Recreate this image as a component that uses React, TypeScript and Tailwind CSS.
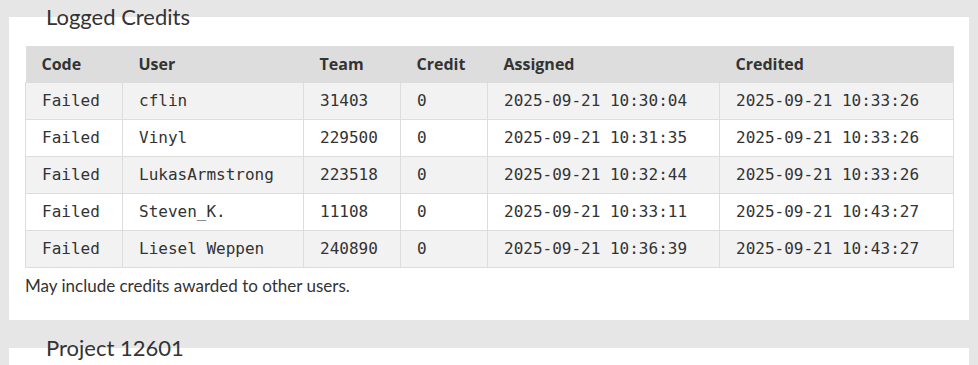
import React from "react";

type Credit = {
    code: string;
    user: string;
    team: string;
    credit: string;
    assigned: string;
    credited: string;
};

const credits: Credit[] = [
    { code: "Failed", user: "cflin", team: "31403", credit: "0", assigned: "2025-09-21 10:30:04", credited: "2025-09-21 10:33:26" },
    { code: "Failed", user: "Vinyl", team: "229500", credit: "0", assigned: "2025-09-21 10:31:35", credited: "2025-09-21 10:33:26" },
    { code: "Failed", user: "LukasArmstrong", team: "223518", credit: "0", assigned: "2025-09-21 10:32:44", credited: "2025-09-21 10:33:26" },
    { code: "Failed", user: "Steven_K.", team: "11108", credit: "0", assigned: "2025-09-21 10:33:11", credited: "2025-09-21 10:43:27" },
    { code: "Failed", user: "Liesel Weppen", team: "240890", credit: "0", assigned: "2025-09-21 10:36:39", credited: "2025-09-21 10:43:27" },
];

const headers = ["Code", "User", "Team", "Credit", "Assigned", "Credited"];
const widths = ["w-[97px]", "w-[181px]", "w-[97px]", "w-[87px]", "w-[232px]", "w-[234px]"];

function Panel({ title, children }: { title: string; children?: React.ReactNode }) {
    return (
        <div className="mx-[9px] mt-[17px] flow-root bg-white px-4 pb-[22px]">
            <h2 className="-mt-[12px] h-6 pl-[21px] text-[22px] leading-6 text-[#333]">{title}</h2>
            {children}
        </div>
    );
}

function App() {
    return (
        <div className="h-[365px] overflow-hidden bg-[#e6e6e6] font-['Lato','Open_Sans',sans-serif]">
            <Panel title="Logged Credits">
                <table className="mt-[17px] w-[928px] table-fixed border-collapse text-[#333]">
                    <thead>
                        <tr className="h-9 bg-[#dddddd]">
                            {headers.map((h, i) => (
                                <th
                                    key={h}
                                    className={`${widths[i]} px-4 text-left text-[16px] font-bold font-['Open_Sans',sans-serif]`}
                                >
                                    {h}
                                </th>
                            ))}
                        </tr>
                    </thead>
                    <tbody className="font-['DejaVu_Sans_Mono',monospace] text-[16px]">
                        {credits.map((c, i) => (
                            <tr key={c.user} className={`h-[37px] ${i % 2 === 0 ? "bg-[#f2f2f2]" : "bg-white"}`}>
                                <td className="border border-[#dddddd] px-4">{c.code}</td>
                                <td className="border border-[#dddddd] px-4">{c.user}</td>
                                <td className="border border-[#dddddd] px-4">{c.team}</td>
                                <td className="border border-[#dddddd] px-4">{c.credit}</td>
                                <td className="border border-[#dddddd] px-4">{c.assigned}</td>
                                <td className="border border-[#dddddd] px-4">{c.credited}</td>
                            </tr>
                        ))}
                    </tbody>
                </table>
                <p className="mt-[6px] text-[17px] leading-6 text-[#333]">May include credits awarded to other users.</p>
            </Panel>
            <div className="h-[11px]" />
            <Panel title="Project 12601">
                <div className="h-10" />
            </Panel>
        </div>
    );
}

export default App;
